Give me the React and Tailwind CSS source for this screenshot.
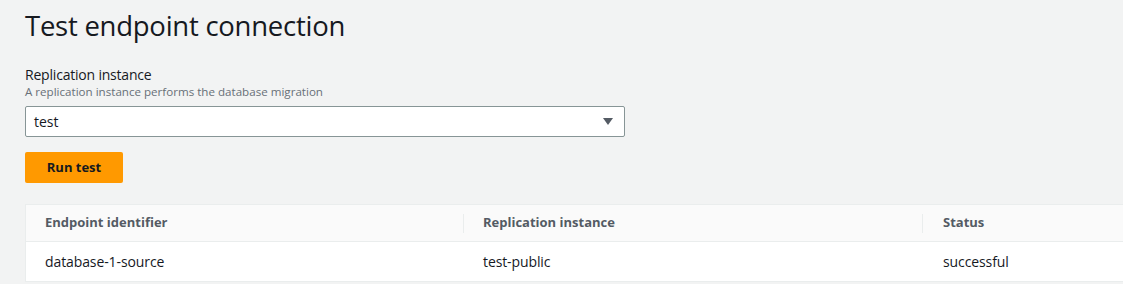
export default function App() {
  return (
    <div
      className="w-[1123px] h-[284px] overflow-hidden bg-[#f2f3f3] text-[#16191f]"
      style={{ fontFamily: '"Open Sans", "Noto Sans", Arial, sans-serif' }}
    >
      <div className="pl-[25px] pt-[9px]">
        <h1 className="text-[27.5px] leading-[34px] font-normal tracking-[-0.25px]">Test endpoint connection</h1>
        <div className="mt-[23px]">
          <div className="text-[14px] leading-[18px] tracking-[-0.2px]">Replication instance</div>
          <div className="text-[11.6px] leading-[16px] text-[#687078]">A replication instance performs the database migration</div>
          <div className="mt-[6px] w-[600px] h-[31px] bg-white border border-[#879596] rounded-[2px] flex items-center justify-between pl-[8px] pr-[11px]">
            <span className="text-[14px]">test</span>
            <svg width="10" height="7" viewBox="0 0 10 7">
              <path d="M0 0 H10 L5 7 Z" fill="#545b64" />
            </svg>
          </div>
          <button className="mt-[15px] w-[98px] h-[31px] bg-[#ff9900] rounded-[2px] text-[13px] font-bold text-[#16191f] flex items-center justify-center">
            Run test
          </button>
        </div>
        <div className="mt-[21px] border-l border-t border-[#eaeded] bg-white">
          <div className="flex h-[37px] bg-[#fafafa] border-b border-[#eaeded] text-[13px] font-bold text-[#545b64]">
            <div className="w-[437px] flex items-center pl-[19px]">Endpoint identifier</div>
            <div className="w-[459px] flex items-center pl-[20px] relative">
              <span className="absolute left-0 top-[9px] h-[19px] w-px bg-[#eaeded]" />
              Replication instance
            </div>
            <div className="flex-1 flex items-center pl-[21px] relative">
              <span className="absolute left-0 top-[9px] h-[19px] w-px bg-[#eaeded]" />
              Status
            </div>
          </div>
          <div className="flex h-[40px] border-b border-[#eaeded] text-[14px] tracking-[-0.1px]">
            <div className="w-[437px] flex items-center pl-[19px]">database-1-source</div>
            <div className="w-[459px] flex items-center pl-[20px]">test-public</div>
            <div className="flex-1 flex items-center pl-[21px]">successful</div>
          </div>
        </div>
      </div>
    </div>
  );
}
